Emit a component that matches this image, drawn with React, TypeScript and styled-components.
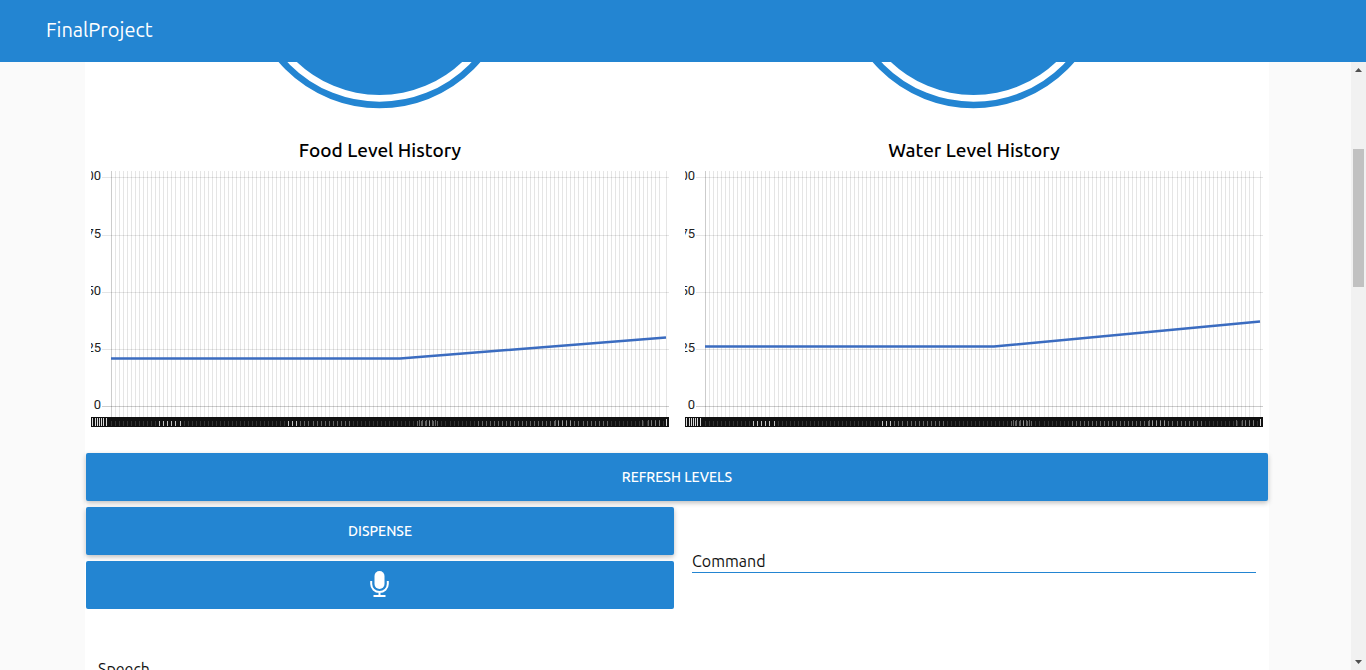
import React from 'react';
import styled, { createGlobalStyle } from 'styled-components';

const blue = '#2385d2';

const GlobalStyle = createGlobalStyle`
  * { box-sizing: border-box; }
  body { margin: 0; background: #fafafa; color: #111; font-family: Ubuntu, "Noto Sans", sans-serif; }
`;

const Page = styled.div`
  display: flex;
  flex-direction: column;
  height: 100vh;
  overflow: hidden;
`;

const Header = styled.header`
  flex: none;
  display: flex;
  align-items: center;
  height: 62px;
  padding: 0 46px 2px;
  background: ${blue};
  color: #fff;
`;

const Brand = styled.a`
  color: inherit;
  text-decoration: none;
  font-size: 20px;
  line-height: 28px;
`;

const Viewport = styled.div`
  flex: 1;
  min-height: 0;
  display: flex;
`;

const Content = styled.div`
  flex: 1;
  min-width: 0;
  padding: 0 82px 0 85px;
  overflow: hidden;
`;

const Panel = styled.main`
  min-height: 100%;
  background: #fff;
`;

const Levels = styled.div`
  display: grid;
  grid-template-columns: 1fr 1fr;
  gap: 16px;
  padding: 0 6px 24px;
`;

const Level = styled.section`
  display: flex;
  flex-direction: column;
  align-items: center;
`;

const GaugeArt = styled.svg`
  display: block;
  width: 266px;
  height: 48px;
`;

const Title = styled.h2`
  margin: 28px 0 8px;
  color: #000;
  font-size: 19px;
  line-height: 25px;
  font-weight: 500;
`;

const ChartArt = styled.svg`
  display: block;
  width: 100%;
  font-family: Roboto, sans-serif;
`;

const Controls = styled.div`
  display: grid;
  grid-template-columns: 1fr 1fr;
  gap: 6px;
  padding: 0 1px;
`;

const Stack = styled.div`
  display: flex;
  flex-direction: column;
  gap: 6px;
`;

const Button = styled.button<{ $wide?: boolean; $flat?: boolean }>`
  display: flex;
  align-items: center;
  justify-content: center;
  grid-column: ${p => (p.$wide ? '1 / -1' : 'auto')};
  height: 48px;
  padding: 0;
  border: 0;
  border-radius: 2px;
  background: ${blue};
  color: #fff;
  font: 500 14px/20px Ubuntu, "Noto Sans", sans-serif;
  text-transform: uppercase;
  box-shadow: ${p => (p.$flat ? 'none' : '0 2px 5px rgba(0, 0, 0, 0.26)')};
`;

const Field = styled.label`
  display: block;
  padding: 42px 12px 0;
`;

const Input = styled.input`
  display: block;
  width: 100%;
  height: 24px;
  padding: 0;
  border: 0;
  border-bottom: 1px solid ${blue};
  outline: 0;
  background: transparent;
  color: #111;
  font: 400 16px/22px Ubuntu, "Noto Sans", sans-serif;
  &::placeholder { color: #111; opacity: 1; }
`;

const Speech = styled.p`
  margin: 48px 13px 0;
  font-size: 16px;
  line-height: 24px;
`;

const Scrollbar = styled.div`
  flex: none;
  display: flex;
  flex-direction: column;
  align-items: center;
  width: 15px;
  background: #f1f1f1;
`;

const Arrow = styled.svg`
  flex: none;
  width: 15px;
  height: 17px;
`;

const Track = styled.div`
  flex: 1;
  padding-top: 70px;
`;

const Thumb = styled.div`
  width: 11px;
  height: 138px;
  background: #c1c1c1;
`;

function Gauge() {
  return (
    <GaugeArt viewBox="0 219 266 48" aria-hidden="true">
      <circle cx="132.500" cy="132" r="130" fill="#fff" stroke={blue} strokeWidth="6.500" />
      <circle cx="132.500" cy="132" r="120" fill={blue} />
    </GaugeArt>
  );
}

const gridXs = [...Array.from({ length: 137 }, (_, i) => 20 + Math.round(i * 4.03)), 575];
const yTicks = [
  { label: '100', y: 6 },
  { label: '75', y: 64 },
  { label: '50', y: 121 },
  { label: '25', y: 178 },
  { label: '0', y: 235 },
];

// Overlapping date labels merge into a dark band that only lets slivers of white through.
const slivers = [
  ...[1, 4, 6, 8, 10, 12, 15].map(x => ({ x, y: 247, h: 8, o: 0.85 })),
  ...Array.from({ length: 138 }, (_, i) => {
    const x = 20 + Math.round(i * 4.03);
    const bright = (x > 66 && x < 92) || (x > 194 && x < 208);
    const medium = (x > 206 && x < 262) || (x > 325 && x < 350) || (x > 385 && x < 520);
    return { x, y: 250, h: 5, o: bright ? 0.75 : medium ? 0.35 : 0.15 };
  }),
  ...[328, 331, 335, 338, 341, 344, 464, 467, 471, 475, 479, 551, 557, 560, 564, 568].map(x => ({ x, y: 249, h: 6, o: 0.35 })),
  { x: 575, y: 248, h: 7, o: 0.85 },
];

function Chart({ name, points }: { name: string; points: string }) {
  return (
    <ChartArt viewBox="0 0 578 258" role="img" aria-label={name}>
      {gridXs.map((x, i) => (
        <rect key={x} x={x} y="0" width="1" height="246" fill="#000" fillOpacity={i ? 0.1 : 0.2} />
      ))}
      {yTicks.map(t => (
        <g key={t.label}>
          <rect x="11" y={t.y} width="567" height="1" fill="#000" fillOpacity={t.y === 235 ? 0.2 : 0.1} />
          <text x="10" y={t.y + 3} textAnchor="end" fontSize="13" fill="#222">{t.label}</text>
        </g>
      ))}
      <polyline points={points} fill="none" stroke="#3b6cc0" strokeWidth="2.400" />
      <rect y="246" width="578" height="10" fill="#111" />
      {slivers.map((s, i) => (
        <rect key={i} x={s.x} y={s.y} width="1" height={s.h} fill="#fff" fillOpacity={s.o} />
      ))}
    </ChartArt>
  );
}

export default function App() {
  return (
    <Page>
      <GlobalStyle />
      <Header><Brand href="#">FinalProject</Brand></Header>
      <Viewport>
        <Content>
          <Panel>
            <Levels>
              <Level>
                <Gauge />
                <Title>Food Level History</Title>
                <Chart name="Food level history" points="20,187.5 309,187.5 575,166.5" />
              </Level>
              <Level>
                <Gauge />
                <Title>Water Level History</Title>
                <Chart name="Water level history" points="20,175.5 309,175.5 575,150.5" />
              </Level>
            </Levels>
            <Controls>
              <Button type="button" $wide>Refresh Levels</Button>
              <Stack>
                <Button type="button">Dispense</Button>
                <Button type="button" $flat aria-label="Speak">
                  <svg width="20" height="28" viewBox="0 0 20 28" fill="none" aria-hidden="true">
                    <rect x="4.500" y="0" width="10" height="18" rx="5" fill="#fff" />
                    <path d="M1.200 10v3a8.300 8 0 0 0 16.600 0v-3M9.500 21v4M3.500 25h12" stroke="#fff" strokeWidth="2" />
                  </svg>
                </Button>
              </Stack>
              <Field><Input aria-label="Command" placeholder="Command" /></Field>
            </Controls>
            <Speech>Speech</Speech>
          </Panel>
        </Content>
        <Scrollbar aria-hidden="true">
          <Arrow viewBox="0 0 15 17"><path d="M4 10h7L7.500 6z" fill="#505050" /></Arrow>
          <Track><Thumb /></Track>
          <Arrow viewBox="0 0 15 17"><path d="M4 7h7L7.500 11z" fill="#505050" /></Arrow>
        </Scrollbar>
      </Viewport>
    </Page>
  );
}
